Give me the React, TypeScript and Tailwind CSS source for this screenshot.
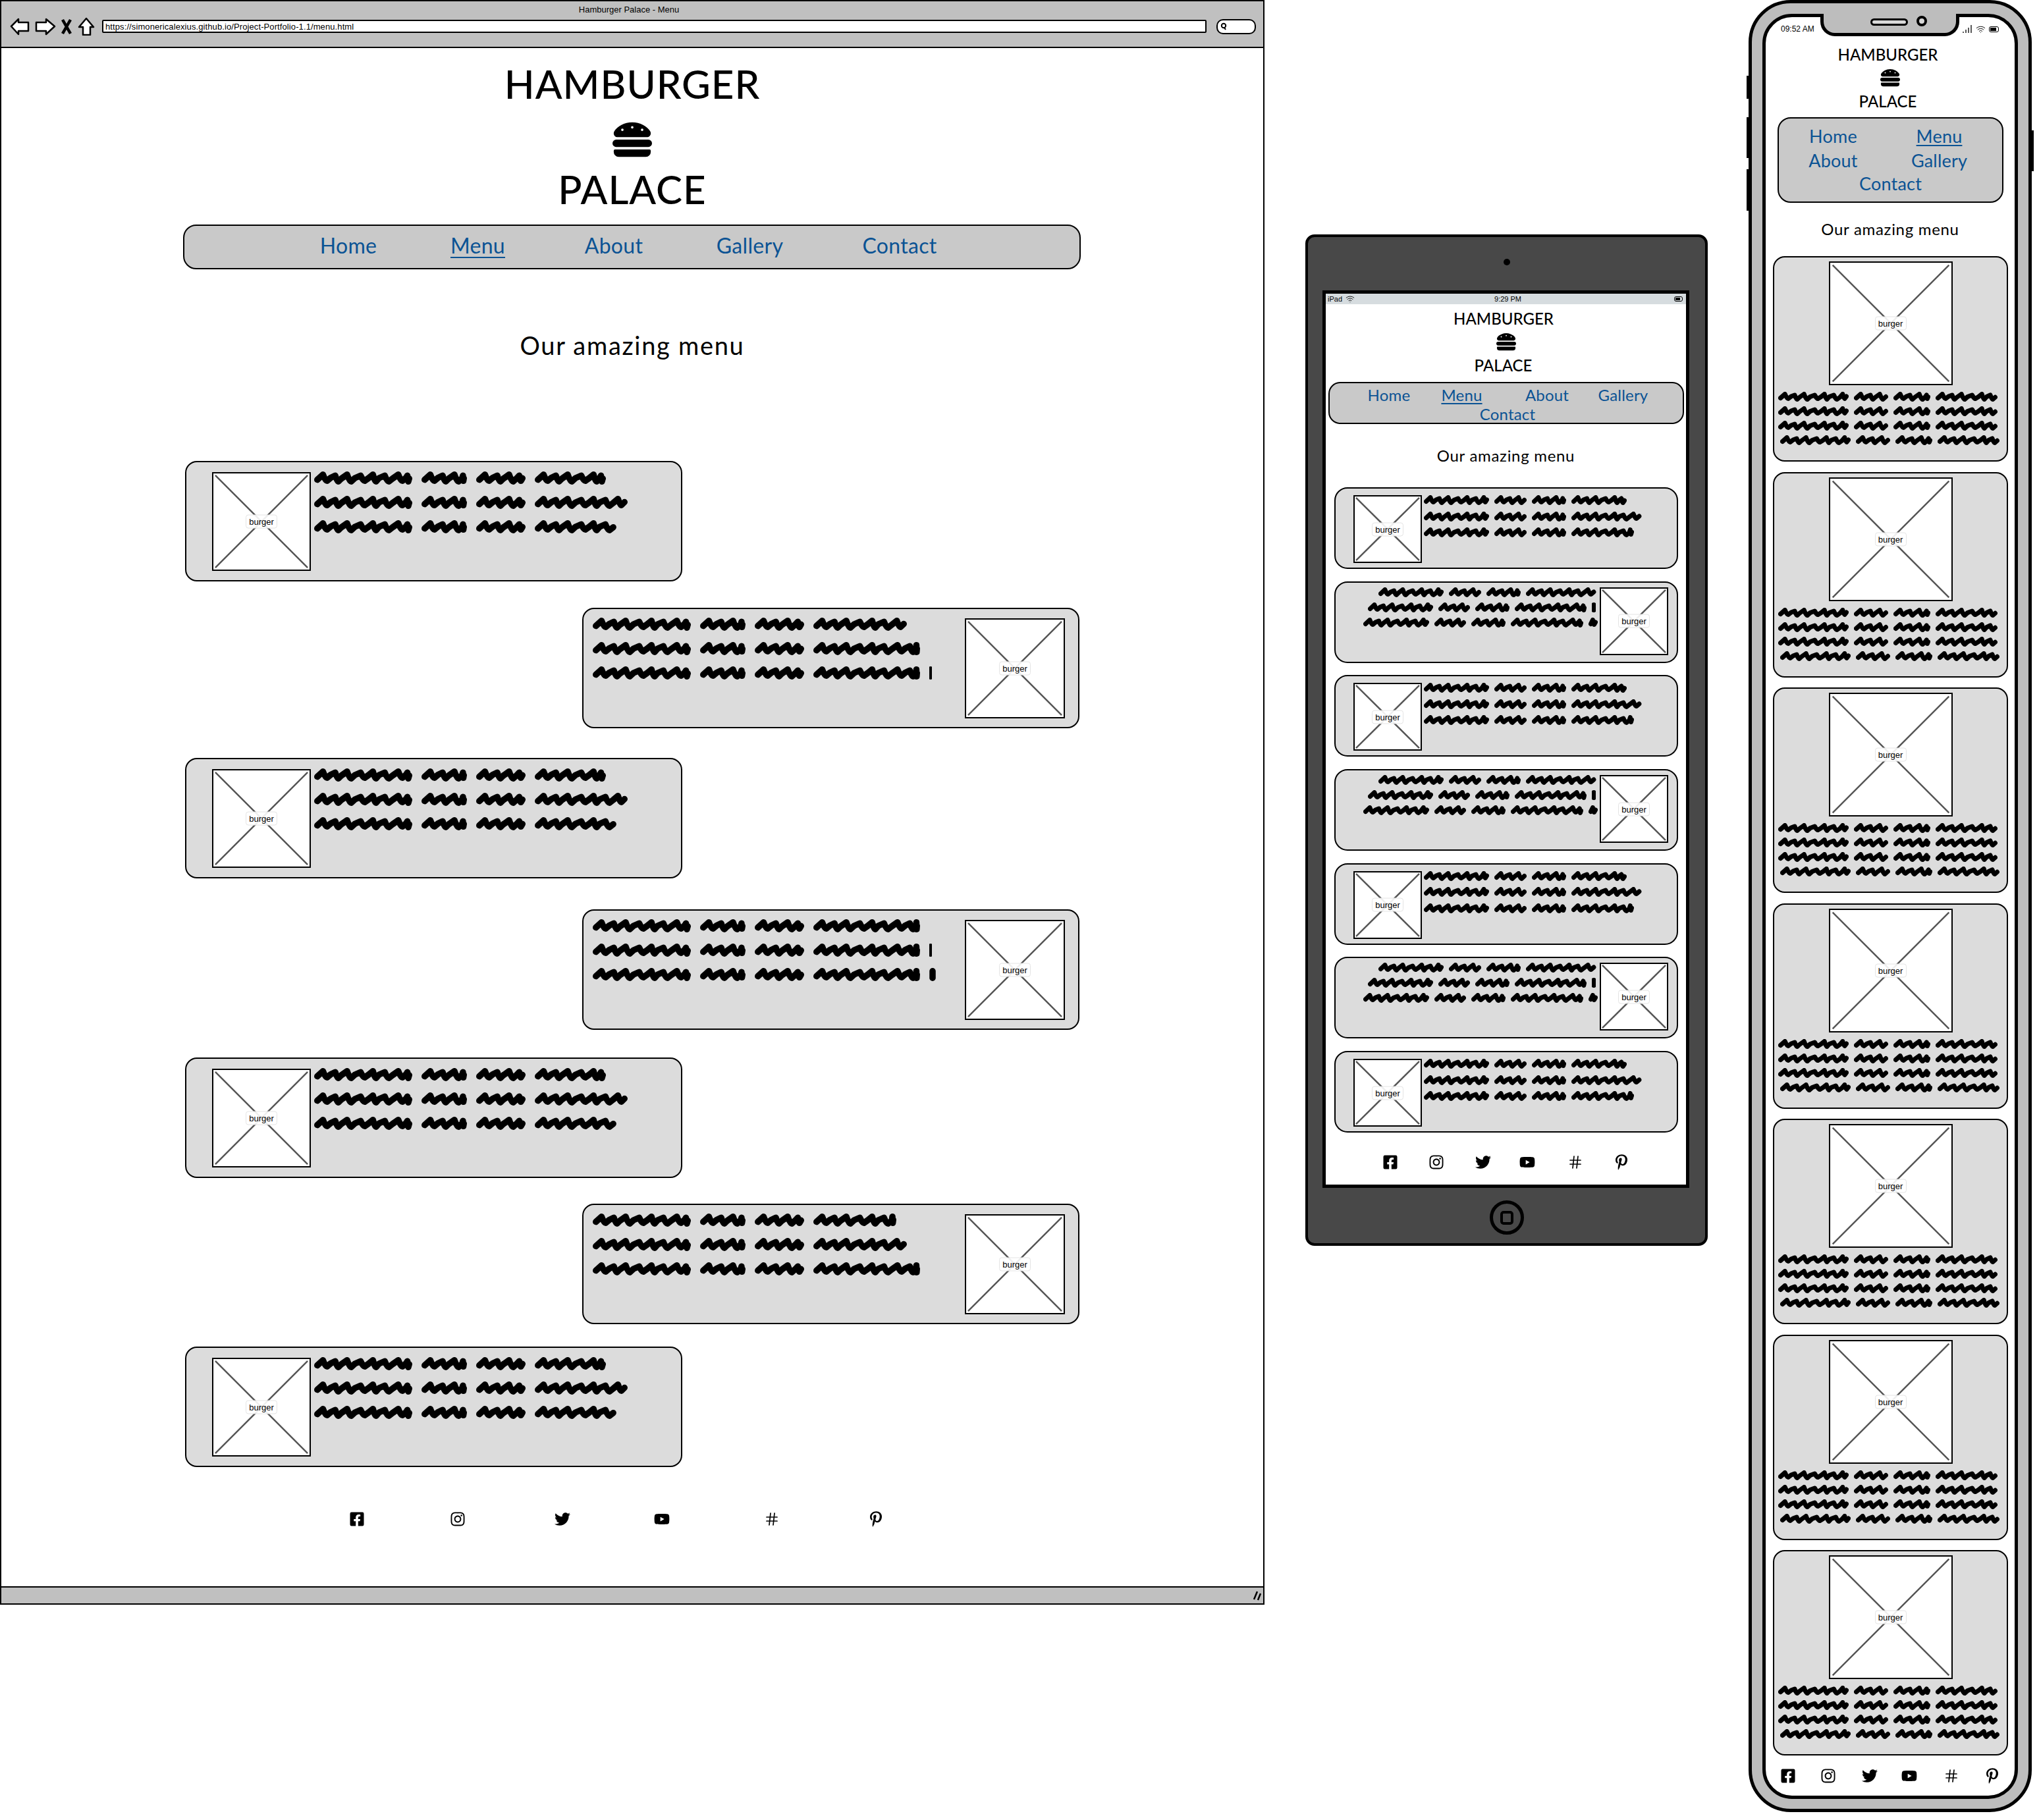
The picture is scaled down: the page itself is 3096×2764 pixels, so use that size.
import React from "react";
import { FaHamburger, FaFacebookSquare, FaInstagram, FaTwitter, FaYoutube, FaPinterestP } from "react-icons/fa";
import { Hash, Wifi } from "lucide-react";

function wavePath(w: number, h: number, sw: number, period: number) {
  const top = sw / 2;
  const bot = h - sw / 2;
  if (w <= sw + 4) {
    return `M${w / 2} ${top} L${w / 2} ${bot}`;
  }
  let x = sw / 2;
  const end = w - sw / 2;
  let d = `M${x} ${bot - (bot - top) * 0.25}`;
  let i = 0;
  while (x < end - 1) {
    const p = Math.min(period * (i % 3 === 1 ? 0.85 : 1.08), end - x);
    const t = top + (i % 2 ? 1.5 : 0);
    const b = bot - (i % 3 === 0 ? 1 : 0);
    d += ` L${x + p * 0.42} ${t}`;
    d += ` Q${x + p * 0.6} ${b} ${x + p * 0.72} ${b} L${x + p} ${(t + b) / 2}`;
    x += p;
    i++;
  }
  return d;
}

function Word({ w, h, sw, period }: { w: number; h: number; sw: number; period: number }) {
  return (
    <svg width={w} height={h} className="shrink-0 block">
      <path d={wavePath(w, h, sw, period)} fill="none" stroke="#000" strokeWidth={sw} strokeLinecap="round" strokeLinejoin="round" />
    </svg>
  );
}

type Row = { cls?: string; words: number[] };

function Scribble({ rows, h, sw, period, blockCls, gapCls }: { rows: Row[]; h: number; sw: number; period: number; blockCls: string; gapCls: string }) {
  return (
    <div className={blockCls}>
      {rows.map((r, i) => (
        <div key={i} className={`flex ${gapCls} ${r.cls ?? ""}`}>
          {r.words.map((w, j) => (
            <Word key={j} w={w} h={h} sw={sw} period={period} />
          ))}
        </div>
      ))}
    </div>
  );
}

function Placeholder({ cls }: { cls: string }) {
  return (
    <div className={`relative shrink-0 bg-white border-[2.5px] border-black ${cls}`}>
      <svg className="absolute inset-0 w-full h-full" viewBox="0 0 100 100" preserveAspectRatio="none">
        <path d="M2 2L98 98M98 2L2 98" stroke="#555" strokeWidth="2.5" vectorEffect="non-scaling-stroke" fill="none" />
      </svg>
      <div className="absolute left-1/2 top-1/2 -translate-x-1/2 -translate-y-1/2 w-[48px] h-[21px] flex items-center justify-center rounded-[4px] bg-white/90 border border-[#e4e4e4] text-[13px] leading-none text-black font-['Liberation_Sans',sans-serif]">
        burger
      </div>
    </div>
  );
}

function Socials({ cls, size }: { cls: string; size: number }) {
  const items = [
    <FaFacebookSquare size={size} />,
    <FaInstagram size={size} />,
    <FaTwitter size={size} />,
    <FaYoutube size={size} />,
    <Hash size={size} strokeWidth={1.7} />,
    <FaPinterestP size={size} />,
  ];
  return (
    <div className={`grid ${cls}`}>
      {items.map((it, i) => (
        <div key={i} className="w-[40px] h-[30px] flex items-center justify-center text-black">
          {it}
        </div>
      ))}
    </div>
  );
}

const link = "text-[#0b5394] text-center";

function DesktopLeft({ cls, rows }: { cls: string; rows: Row[] }) {
  return (
    <div className={`w-[755px] h-[183px] ml-[279px] flex items-start pl-[39px] pt-[15px] rounded-[18px] border-2 border-black bg-[#dcdcdc] ${cls}`}>
      <Placeholder cls="w-[150px] h-[150px]" />
      <Scribble rows={rows} h={20} sw={9.5} period={19} blockCls="ml-[5px] -mt-[1px] flex flex-col gap-[17px]" gapCls="gap-[14px]" />
    </div>
  );
}

function DesktopRight({ cls, rows }: { cls: string; rows: Row[] }) {
  return (
    <div className={`w-[755px] h-[183px] ml-[882px] flex items-start justify-between pl-[14px] pr-[20px] pt-[14px] rounded-[18px] border-2 border-black bg-[#dcdcdc] ${cls}`}>
      <Scribble rows={rows} h={20} sw={9.5} period={19} blockCls="-mt-[1px] flex flex-col gap-[17px]" gapCls="gap-[14px]" />
      <Placeholder cls="w-[152px] h-[152px]" />
    </div>
  );
}

const dL: Row[] = [
  { words: [149, 69, 75, 108] },
  { words: [149, 69, 75, 141] },
  { words: [149, 69, 75, 124] },
];

function Desktop() {
  return (
    <div className="w-[1920px] h-[2437px] shrink-0 flex flex-col border-2 border-black bg-white">
      <div className="h-[71px] shrink-0 bg-[#c0c0c0] border-b-2 border-black flex flex-col">
        <div className="h-[24px] flex items-center justify-center text-[13px] leading-none text-black font-['Liberation_Sans',sans-serif] -translate-x-[5px]">
          Hamburger Palace - Menu
        </div>
        <div className="flex items-center h-[28px] pl-[13px]">
          <svg width="130" height="28" viewBox="0 0 130 28" className="shrink-0">
            <g fill="#fff" stroke="#000" strokeWidth="2.5" strokeLinejoin="round">
              <path d="M2 14L13 3V8H28V21H13V26Z" />
              <path d="M68 14L55 3V8H40V21H55V26Z" />
              <path d="M116 2L127 15H122V27H111V15H105Z" />
            </g>
            <path d="M80 4L92 25M92 4L80 25" stroke="#000" strokeWidth="4.5" fill="none" />
          </svg>
          <div className="w-[1677px] h-[20px] ml-[10px] shrink-0 flex items-center bg-white border-2 border-black rounded-[2px] pl-[3px] text-[13px] tracking-[0.1px] leading-none text-black font-['Liberation_Sans',sans-serif]">
            https://simonericalexius.github.io/Project-Portfolio-1.1/menu.html
          </div>
          <div className="w-[60px] h-[23px] ml-[15px] shrink-0 flex items-center pl-[4px] bg-white border-2 border-black rounded-[10px]">
            <svg width="10" height="12" viewBox="0 0 10 12">
              <circle cx="5" cy="5" r="3.2" fill="none" stroke="#000" strokeWidth="2" />
              <path d="M6 8L8 11" stroke="#000" strokeWidth="2" />
            </svg>
          </div>
        </div>
      </div>
      <div className="flex-1 flex flex-col font-['Lato',sans-serif] text-black">
        <div className="mt-[24px] h-[60px] text-[60px] leading-[60px] font-medium text-center tracking-[1px]">HAMBURGER</div>
        <div className="mt-[25px] h-[60px] flex justify-center"><FaHamburger size={60} /></div>
        <div className="mt-[15px] h-[60px] text-[60px] leading-[60px] font-medium text-center tracking-[1px]">PALACE</div>
        <div className="mt-[24px] ml-[276px] w-[1363px] h-[68px] rounded-[20px] border-2 border-black bg-[#c9c9c9] pl-[151px] pb-[4px] grid grid-cols-[196px_197px_216px_197px_258px] items-center text-[32px] tracking-[0.3px] leading-none">
          <span className={link}>Home</span>
          <span className={link}><span className="underline decoration-2 underline-offset-[5px]">Menu</span></span>
          <span className={link}>About</span>
          <span className={link}>Gallery</span>
          <span className={link}>Contact</span>
        </div>
        <div className="mt-[93px] h-[44px] text-[38px] tracking-[1.7px] leading-[44px] text-center">Our amazing menu</div>
        <DesktopLeft cls="mt-[154px]" rows={dL} />
        <DesktopRight cls="mt-[40px]" rows={[{ words: [149, 69, 75, 142] }, { words: [149, 69, 75, 162] }, { words: [149, 69, 75, 162, 4] }]} />
        <DesktopLeft cls="mt-[45px]" rows={dL} />
        <DesktopRight cls="mt-[47px]" rows={[{ words: [149, 69, 75, 162] }, { words: [149, 69, 75, 162, 4] }, { words: [149, 69, 75, 162, 10] }]} />
        <DesktopLeft cls="mt-[42px]" rows={dL} />
        <DesktopRight cls="mt-[39px]" rows={[{ words: [149, 69, 75, 126] }, { words: [149, 69, 75, 142] }, { words: [149, 69, 75, 162] }]} />
        <DesktopLeft cls="mt-[34px]" rows={dL} />
        <Socials size={24} cls="mt-[64px] ml-[520px] grid-cols-[153px_159px_151px_167px_158px_40px]" />
        <div className="mt-auto h-[26px] shrink-0 bg-[#c0c0c0] border-t-2 border-black flex items-center justify-end pr-[2px]">
          <svg width="14" height="18" viewBox="0 0 14 18">
            <path d="M2 15L7 3M8 16L12 6" stroke="#000" strokeWidth="2.5" fill="none" />
          </svg>
        </div>
      </div>
    </div>
  );
}

const tL: Row[] = [
  { words: [99, 49, 52, 84] },
  { words: [99, 49, 52, 107] },
  { words: [99, 49, 52, 95] },
];
const tR: Row[] = [
  { cls: "ml-[65px]", words: [99, 49, 52, 107] },
  { cls: "ml-[49px]", words: [99, 48, 52, 109, 6] },
  { cls: "ml-[42px]", words: [100, 48, 52, 110, 14] },
];

function TabletLeft() {
  return (
    <div className="h-[124px] flex items-start pl-[27px] pt-[10px] rounded-[20px] border-2 border-black bg-[#dcdcdc]">
      <Placeholder cls="w-[104px] h-[103px]" />
      <Scribble rows={tL} h={15} sw={7} period={14} blockCls="ml-[3px] flex flex-col gap-[9.5px]" gapCls="gap-[8px]" />
    </div>
  );
}
function TabletRight() {
  return (
    <div className="h-[124px] flex items-start justify-between pr-[13px] pt-[7px] rounded-[20px] border-2 border-black bg-[#dcdcdc]">
      <Scribble rows={tR} h={15} sw={7} period={14} blockCls="w-[398px] overflow-hidden flex flex-col gap-[8px]" gapCls="gap-[8px]" />
      <Placeholder cls="w-[104px] h-[103px]" />
    </div>
  );
}

function Tablet() {
  return (
    <div className="w-[611px] h-[1536px] shrink-0 ml-[62px] mt-[356px] flex flex-col rounded-[14px] border-4 border-black bg-[#484848]">
      <div className="mt-[33px] w-[10px] h-[10px] self-center rounded-full bg-black" />
      <div className="mt-[38px] ml-[22px] w-[557px] h-[1363px] shrink-0 flex flex-col border-[5px] border-black bg-white font-['Lato',sans-serif] text-black">
        <div className="h-[16px] shrink-0 bg-[#d6dcdf] flex items-center px-[3px] text-[11px] leading-none font-['Liberation_Sans',sans-serif]">
          <span>iPad</span>
          <Wifi size={14} strokeWidth={1.5} className="ml-[5px]" />
          <span className="ml-[212px]">9:29 PM</span>
          <div className="ml-auto w-[13px] h-[8px] rounded-[3px] border border-black p-[1px] mr-[2px]"><div className="w-[7px] h-full bg-black" /></div>
        </div>
        <div className="mt-[7px] h-[30px] pr-[7px] text-[24px] leading-[30px] text-center font-medium">HAMBURGER</div>
        <div className="mt-[5px] h-[30px] flex justify-center"><FaHamburger size={30} /></div>
        <div className="mt-[6px] h-[30px] pr-[8px] text-[24px] leading-[30px] text-center font-medium">PALACE</div>
        <div className="mt-[10px] ml-[4px] w-[540px] h-[64px] shrink-0 flex flex-col rounded-[18px] border-2 border-black bg-[#c9c9c9] pt-[3px] text-[24px] tracking-[0.2px] leading-[29px]">
          <div className="pl-[40px] grid grid-cols-[100px_121px_138px_93px]">
            <span className={link}>Home</span>
            <span className={link}><span className="underline decoration-2 underline-offset-[3px]">Menu</span></span>
            <span className={link}>About</span>
            <span className={link}>Gallery</span>
          </div>
          <div className={`${link} pl-[4px]`}>Contact</div>
        </div>
        <div className="mt-[33px] h-[30px] text-[24px] tracking-[0.7px] leading-[30px] text-center">Our amazing menu</div>
        <div className="mt-[33px] ml-[13px] w-[522px] flex flex-col gap-[18.7px]">
          <TabletLeft />
          <TabletRight />
          <TabletLeft />
          <TabletRight />
          <TabletLeft />
          <TabletRight />
          <TabletLeft />
        </div>
        <Socials size={24} cls="mt-[30px] ml-[78px] grid-cols-[70px_71px_67px_73px_70px_40px]" />
      </div>
      <div className="mt-[19px] self-center w-[52px] h-[52px] flex items-center justify-center rounded-full border-[5px] border-black">
        <div className="w-[20px] h-[21px] rounded-[5px] border-[4px] border-black" />
      </div>
    </div>
  );
}

const pR: Row[] = [
  { words: [107, 52, 56, 94] },
  { words: [107, 52, 56, 94] },
  { words: [107, 52, 56, 94] },
  { cls: "ml-[3px]", words: [107, 52, 56, 94] },
];

function PhoneCard() {
  return (
    <div className="h-[312px] flex flex-col items-center pt-[6px] rounded-[18px] border-2 border-black bg-[#dcdcdc]">
      <Placeholder cls="w-[188px] h-[188px]" />
      <Scribble rows={pR} h={15} sw={7} period={15} blockCls="mt-[10px] self-start ml-[6px] flex flex-col gap-[7px]" gapCls="gap-[8px]" />
    </div>
  );
}

function Phone() {
  return (
    <div className="relative w-[430px] h-[2752px] shrink-0 ml-[62px] rounded-[64px] border-[5px] border-black bg-[#bdbdbd] pl-[16px] pt-[16px]">
      <div className="absolute -left-[8px] top-[110px] w-[3px] h-[35px] bg-black" />
      <div className="absolute -left-[8px] top-[173px] w-[3px] h-[62px] bg-black" />
      <div className="absolute -left-[8px] top-[252px] w-[3px] h-[63px] bg-black" />
      <div className="absolute -right-[8px] top-[193px] w-[3px] h-[62px] bg-black" />
      <div className="absolute left-[104px] top-[16px] w-[211px] h-[34px] rounded-b-[22px] border-[5px] border-t-0 border-black bg-[#bdbdbd] z-10">
        <div className="absolute left-[71px] top-[7px] w-[57px] h-[11px] rounded-full border-[3px] border-black bg-[#d8d8d8]" />
        <div className="absolute left-[141px] top-[3px] w-[16px] h-[16px] rounded-full border-[4px] border-black bg-[#d8d8d8]" />
      </div>
      <div className="w-[388px] h-[2711px] rounded-[45px] border-[5px] border-black bg-white flex flex-col font-['Lato',sans-serif] text-black">
        <div className="h-[36px] shrink-0 flex items-center pl-[23px] pr-[24px] text-[12px] leading-none font-['Liberation_Sans',sans-serif]">
          <span>09:52 AM</span>
          <svg width="16" height="14" viewBox="0 0 16 14" className="ml-auto">
            <path d="M1 13V11M5 13V8M9 13V5M13 13V1" stroke="#000" strokeWidth="1.3" fill="none" />
          </svg>
          <Wifi size={15} strokeWidth={1.5} className="ml-[4px]" />
          <div className="ml-[5px] w-[15px] h-[9px] rounded-[3px] border border-black p-[1px]"><div className="w-[9px] h-full bg-black" /></div>
        </div>
        <div className="mt-[6px] h-[30px] pr-[7px] text-[24px] leading-[30px] text-center font-medium">HAMBURGER</div>
        <div className="mt-[5px] h-[30px] flex justify-center"><FaHamburger size={30} /></div>
        <div className="mt-[6px] h-[30px] pr-[7px] text-[24px] leading-[30px] text-center font-medium">PALACE</div>
        <div className="mt-[9px] ml-[18px] w-[343px] h-[130px] shrink-0 rounded-[20px] border-2 border-black bg-[#c9c9c9] pt-[7px] pl-[2px] text-[27px] tracking-[0.2px] leading-none">
          <div className="grid grid-cols-[161px_161px] grid-rows-[38px_36px_34px] items-center">
            <span className={link}>Home</span>
            <span className={link}><span className="underline decoration-2 underline-offset-[3px]">Menu</span></span>
            <span className={link}>About</span>
            <span className={link}>Gallery</span>
            <span className={`${link} col-span-2 pl-[13px]`}>Contact</span>
          </div>
        </div>
        <div className="mt-[25px] h-[30px] text-[24px] tracking-[0.7px] leading-[30px] text-center">Our amazing menu</div>
        <div className="mt-[26px] ml-[11px] w-[357px] flex flex-col gap-[15.5px]">
          <PhoneCard />
          <PhoneCard />
          <PhoneCard />
          <PhoneCard />
          <PhoneCard />
          <PhoneCard />
          <PhoneCard />
        </div>
        <Socials size={24} cls="mt-[16px] ml-[14px] grid-cols-[61px_63px_60px_64px_62px_40px]" />
      </div>
    </div>
  );
}

export default function App() {
  return (
    <div className="w-[3096px] h-[2764px] flex items-start bg-white overflow-hidden">
      <Desktop />
      <Tablet />
      <Phone />
    </div>
  );
}
